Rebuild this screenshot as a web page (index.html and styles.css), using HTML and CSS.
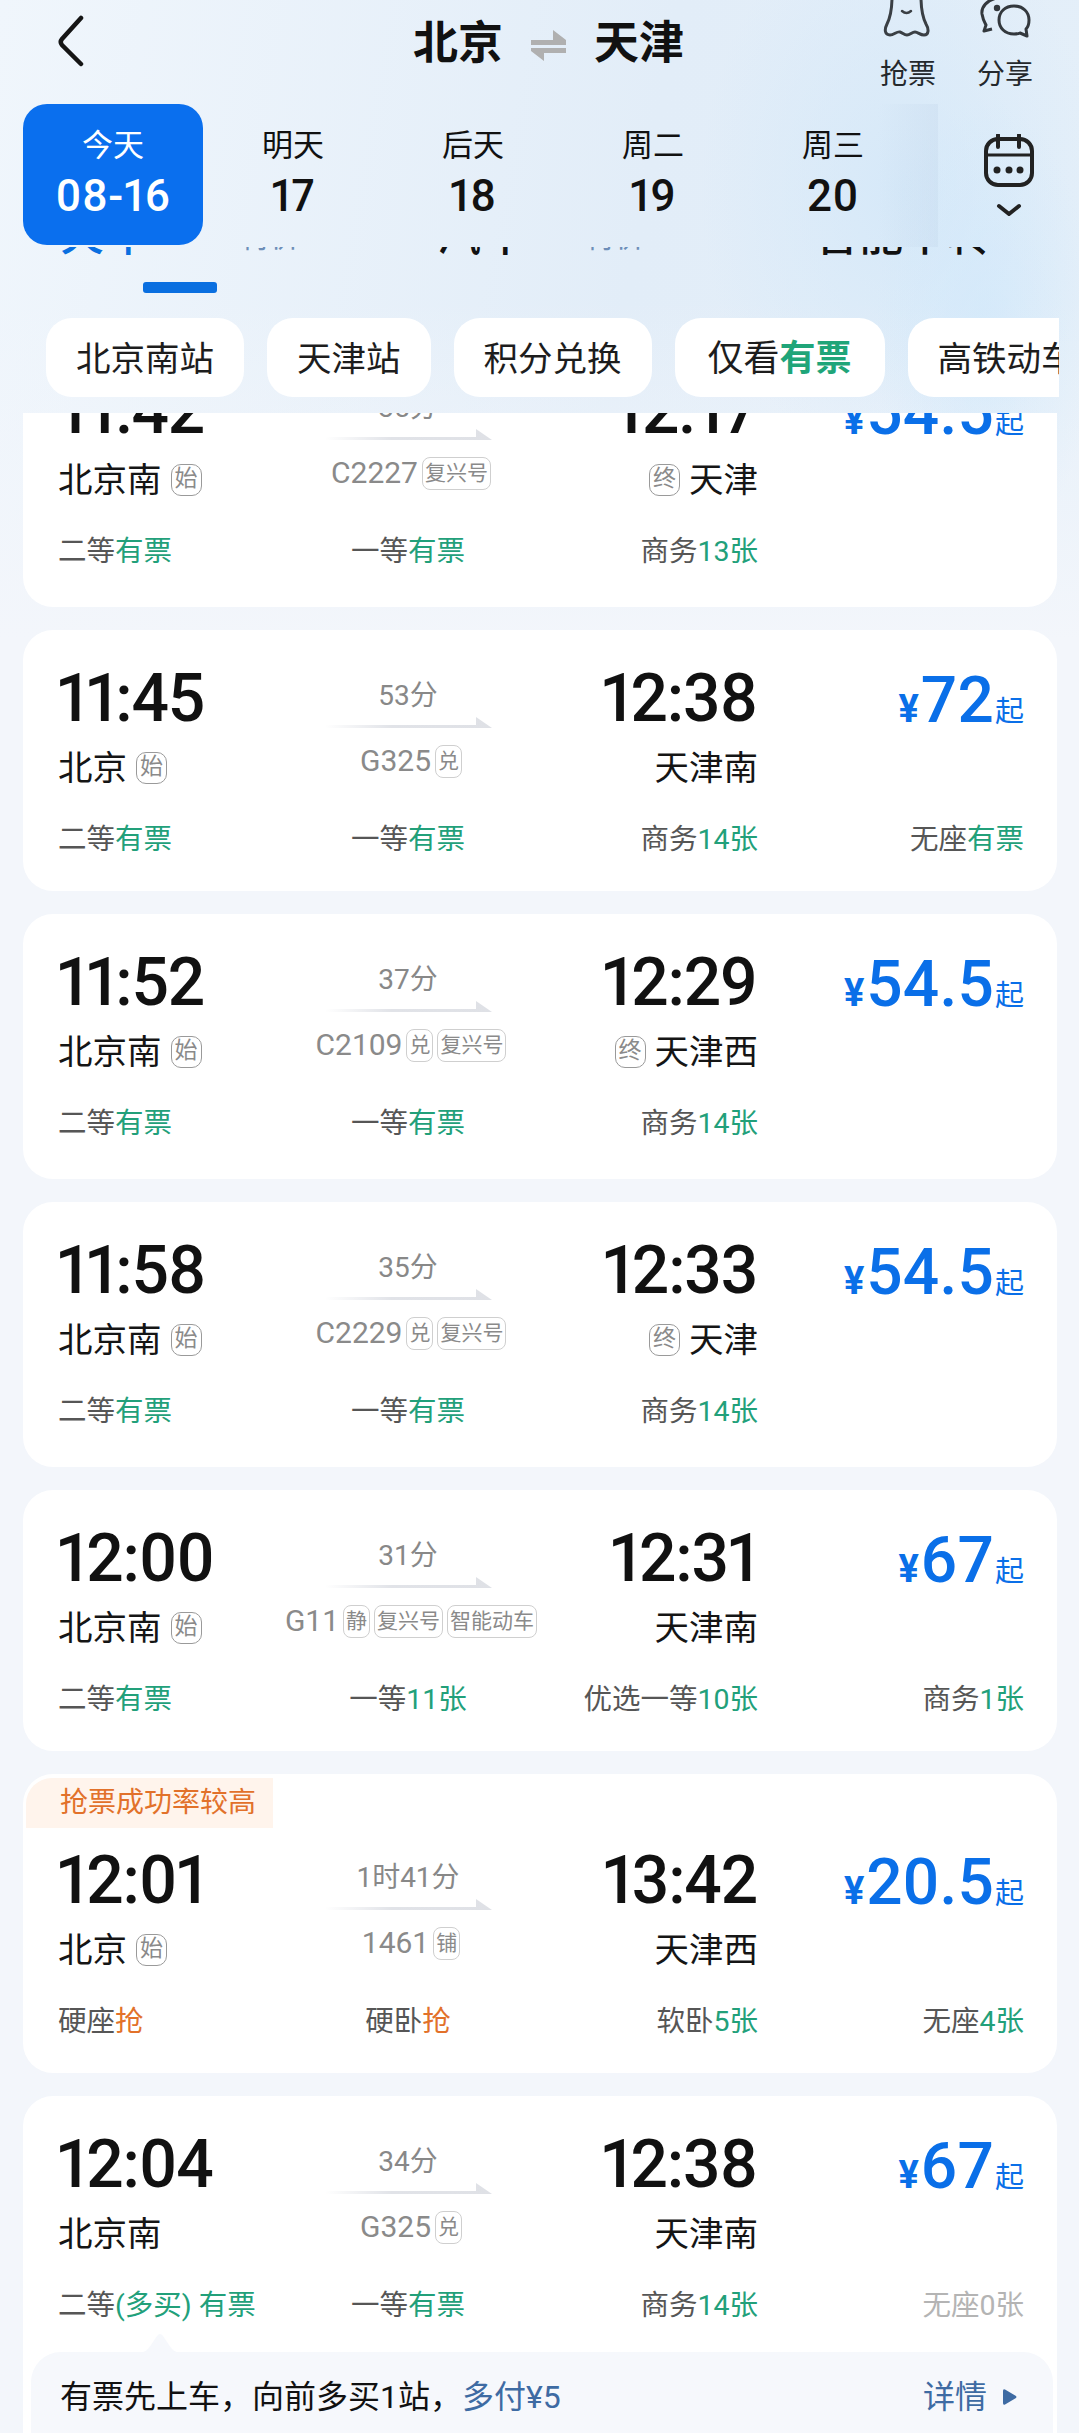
FILE: index.html
```html
<!DOCTYPE html>
<html lang="zh-CN">
<head>
<meta charset="utf-8">
<title>北京 - 天津</title>
<link rel="stylesheet" href="styles.css">
</head>
<body>
<div class="page">
  <header class="topbar">
    <svg class="back" viewBox="0 0 30 52" width="30" height="52"><path d="M26 3 L7 24 Q4.500 27 7 30 L26 49" fill="none" stroke="#151515" stroke-width="4.500" stroke-linecap="round"/></svg>
    <div class="route">
      <span>北京</span>
      <svg class="swap" viewBox="0 0 35 31" width="35" height="31"><path d="M0 10H22V0L35 10V15H0Z M0 18H35V23H13V31L0 21Z" fill="#b0b0b0"/></svg>
      <span>天津</span>
    </div>
    <div class="actions">
      <div class="action">
        <svg class="action-icon" viewBox="0 0 49 38" width="49" height="38"><path d="M8 -3C8 10 6 18 3 24C0 30 1 35 6 35C10 35 13 31 16 32C19 33 20 35 23 35C26 35 28 32 31 32C34 32 36 35 40 35C45 35 45 29 42 24C39 18 37 10 37 -3" fill="none" stroke="#3a3f44" stroke-width="3"/><path d="M18 11Q22.500 15 27 11" fill="none" stroke="#3a3f44" stroke-width="2.500" stroke-linecap="round"/></svg>
        <span>抢票</span>
      </div>
      <div class="action">
        <svg class="action-icon" viewBox="0 0 49 38" width="49" height="38"><path d="M16 -2C6 0 0 7 1 14C2 20 4 23 5 25L3 31L11 29" fill="none" stroke="#33383d" stroke-width="3" stroke-linejoin="round"/><circle cx="16" cy="8" r="3.200" fill="#33383d"/><path d="M33 6C42 6 48 12 48 20C48 24 47 27 45 29L46 36L39 33C37 34 35 34 33 34C24 34 18 28 18 20C18 12 24 6 33 6Z" fill="none" stroke="#33383d" stroke-width="3" stroke-linejoin="round"/></svg>
        <span>分享</span>
      </div>
    </div>
  </header>

  <nav class="dates">
    <div class="date date--active"><span class="date-label">今天</span><span class="date-num">08-16</span></div>
    <div class="date"><span class="date-label">明天</span><span class="date-num">17</span></div>
    <div class="date"><span class="date-label">后天</span><span class="date-num">18</span></div>
    <div class="date"><span class="date-label">周二</span><span class="date-num">19</span></div>
    <div class="date"><span class="date-label">周三</span><span class="date-num">20</span></div>
    <div class="date-fade"></div>
    <div class="calendar">
      <svg viewBox="0 0 50 54" width="50" height="54"><rect x="2" y="5" width="46" height="46" rx="12" fill="none" stroke="#222" stroke-width="4"/><path d="M2 21H48" stroke="#222" stroke-width="3"/><path d="M14 1V13M35 1V13" stroke="#222" stroke-width="4" stroke-linecap="round"/><circle cx="13" cy="36" r="3.500" fill="#222"/><circle cx="25" cy="36" r="3.500" fill="#222"/><circle cx="36" cy="36" r="3.500" fill="#222"/></svg>
      <svg class="calendar-chev" viewBox="0 0 26 14" width="26" height="14"><path d="M3 3L13 11L23 3" fill="none" stroke="#222" stroke-width="4" stroke-linecap="round" stroke-linejoin="round"/></svg>
    </div>
  </nav>

  <div class="tabs">
    <span class="tab tab--active">火车</span>
    <span class="tab-sub tab-sub--a">特价</span>
    <span class="tab tab--b">汽车</span>
    <span class="tab-sub tab-sub--b">特价</span>
    <span class="tab tab--c">智能中转</span>
  </div>
  <div class="tab-bar"></div>

  <div class="chips">
    <span class="chip">北京南站</span>
    <span class="chip">天津站</span>
    <span class="chip">积分兑换</span>
    <span class="chip chip--wide">仅看<b>有票</b></span>
    <span class="chip">高铁动车</span>
  </div>

  <main class="list">
    <div class="list-inner">

      <article class="card card--end">
        <div class="time">11:42</div>
        <div class="dur"><span>35分</span><svg class="arrow" viewBox="0 0 167 11" width="167" height="11"><polygon points="0,8 151,8 151,0 167,11 0,11" fill="url(#fade)"/></svg></div>
        <div class="time time--r">12:17</div>
        <div class="price"><i>¥</i><b>54.5</b><em>起</em></div>
        <div class="station">北京南<span class="mark">始</span></div>
        <div class="train">C2227<span class="tag">复兴号</span></div>
        <div class="station station--r"><span class="mark mark--l">终</span>天津</div>
        <div></div>
        <div class="seat">二等<span class="ok">有票</span></div>
        <div class="seat seat--c">一等<span class="ok">有票</span></div>
        <div class="seat seat--r">商务<span class="ok">13张</span></div>
        <div class="seat seat--r"></div>
      </article>

      <article class="card">
        <div class="time">11:45</div>
        <div class="dur"><span>53分</span><svg class="arrow" viewBox="0 0 167 11" width="167" height="11"><polygon points="0,8 151,8 151,0 167,11 0,11" fill="url(#fade)"/></svg></div>
        <div class="time time--r">12:38</div>
        <div class="price"><i>¥</i><b>72</b><em>起</em></div>
        <div class="station">北京<span class="mark">始</span></div>
        <div class="train">G325<span class="tag">兑</span></div>
        <div class="station station--r">天津南</div>
        <div></div>
        <div class="seat">二等<span class="ok">有票</span></div>
        <div class="seat seat--c">一等<span class="ok">有票</span></div>
        <div class="seat seat--r">商务<span class="ok">14张</span></div>
        <div class="seat seat--r">无座<span class="ok">有票</span></div>
      </article>

      <article class="card card--end">
        <div class="time">11:52</div>
        <div class="dur"><span>37分</span><svg class="arrow" viewBox="0 0 167 11" width="167" height="11"><polygon points="0,8 151,8 151,0 167,11 0,11" fill="url(#fade)"/></svg></div>
        <div class="time time--r">12:29</div>
        <div class="price"><i>¥</i><b>54.5</b><em>起</em></div>
        <div class="station">北京南<span class="mark">始</span></div>
        <div class="train">C2109<span class="tag">兑</span><span class="tag">复兴号</span></div>
        <div class="station station--r"><span class="mark mark--l">终</span>天津西</div>
        <div></div>
        <div class="seat">二等<span class="ok">有票</span></div>
        <div class="seat seat--c">一等<span class="ok">有票</span></div>
        <div class="seat seat--r">商务<span class="ok">14张</span></div>
        <div class="seat seat--r"></div>
      </article>

      <article class="card card--end">
        <div class="time">11:58</div>
        <div class="dur"><span>35分</span><svg class="arrow" viewBox="0 0 167 11" width="167" height="11"><polygon points="0,8 151,8 151,0 167,11 0,11" fill="url(#fade)"/></svg></div>
        <div class="time time--r">12:33</div>
        <div class="price"><i>¥</i><b>54.5</b><em>起</em></div>
        <div class="station">北京南<span class="mark">始</span></div>
        <div class="train">C2229<span class="tag">兑</span><span class="tag">复兴号</span></div>
        <div class="station station--r"><span class="mark mark--l">终</span>天津</div>
        <div></div>
        <div class="seat">二等<span class="ok">有票</span></div>
        <div class="seat seat--c">一等<span class="ok">有票</span></div>
        <div class="seat seat--r">商务<span class="ok">14张</span></div>
        <div class="seat seat--r"></div>
      </article>

      <article class="card">
        <div class="time">12:00</div>
        <div class="dur"><span>31分</span><svg class="arrow" viewBox="0 0 167 11" width="167" height="11"><polygon points="0,8 151,8 151,0 167,11 0,11" fill="url(#fade)"/></svg></div>
        <div class="time time--r">12:31</div>
        <div class="price"><i>¥</i><b>67</b><em>起</em></div>
        <div class="station">北京南<span class="mark">始</span></div>
        <div class="train">G11<span class="tag">静</span><span class="tag">复兴号</span><span class="tag">智能动车</span></div>
        <div class="station station--r">天津南</div>
        <div></div>
        <div class="seat">二等<span class="ok">有票</span></div>
        <div class="seat seat--c">一等<span class="ok">11张</span></div>
        <div class="seat seat--r">优选一等<span class="ok">10张</span></div>
        <div class="seat seat--r">商务<span class="ok">1张</span></div>
      </article>

      <article class="card card--flag">
        <div class="flag">抢票成功率较高</div>
        <div class="time">12:01</div>
        <div class="dur"><span>1时41分</span><svg class="arrow" viewBox="0 0 167 11" width="167" height="11"><polygon points="0,8 151,8 151,0 167,11 0,11" fill="url(#fade)"/></svg></div>
        <div class="time time--r">13:42</div>
        <div class="price"><i>¥</i><b>20.5</b><em>起</em></div>
        <div class="station">北京<span class="mark">始</span></div>
        <div class="train">1461<span class="tag">铺</span></div>
        <div class="station station--r">天津西</div>
        <div></div>
        <div class="seat">硬座<span class="grab">抢</span></div>
        <div class="seat seat--c">硬卧<span class="grab">抢</span></div>
        <div class="seat seat--r">软卧<span class="ok">5张</span></div>
        <div class="seat seat--r">无座<span class="ok">4张</span></div>
      </article>

      <article class="card card--tip">
        <div class="time">12:04</div>
        <div class="dur"><span>34分</span><svg class="arrow" viewBox="0 0 167 11" width="167" height="11"><polygon points="0,8 151,8 151,0 167,11 0,11" fill="url(#fade)"/></svg></div>
        <div class="time time--r">12:38</div>
        <div class="price"><i>¥</i><b>67</b><em>起</em></div>
        <div class="station">北京南</div>
        <div class="train">G325<span class="tag">兑</span></div>
        <div class="station station--r">天津南</div>
        <div></div>
        <div class="seat">二等<span class="ok">(多买) 有票</span></div>
        <div class="seat seat--c">一等<span class="ok">有票</span></div>
        <div class="seat seat--r">商务<span class="ok">14张</span></div>
        <div class="seat seat--r seat--none">无座0张</div>
        <div class="tip">
          <svg class="tip-pin" viewBox="0 0 60 20" width="60" height="20"><path d="M6 20C14 20 17 18 21 12L27 3Q30 -1 33 3L39 12C43 18 46 20 54 20Z" fill="#f6f8fc"/></svg>
          <span class="tip-text">有票先上车，向前多买1站，<span class="tip-pay">多付¥5</span></span>
          <span class="tip-more">详情<svg viewBox="0 0 14 18" width="14" height="18"><path d="M2 1.500L13 8Q14 9 13 10L2 16.500Q0 17.500 0 15V3Q0 0.500 2 1.500Z" fill="#3e6ba3"/></svg></span>
        </div>
      </article>

    </div>
  </main>
</div>
<svg class="defs" width="0" height="0"><defs><linearGradient id="fade"><stop offset="0" stop-color="#e1e3e8" stop-opacity="0"/><stop offset="0.4" stop-color="#e1e3e8"/><stop offset="1" stop-color="#dfe1e6"/></linearGradient></defs></svg>
</body>
</html>
```

FILE: styles.css
```css
* { box-sizing: border-box; }
html, body { margin: 0; padding: 0; }
body {
  width: 1079px;
  height: 2433px;
  overflow: hidden;
  font-family: Roboto, "Noto Sans CJK SC", sans-serif;
  color: #111;
}
.defs { position: absolute; }
.page {
  width: 1079px;
  height: 2433px;
  overflow: hidden;
  background:
    radial-gradient(ellipse 110px 230px at 985px 330px, rgba(205, 231, 251, .55), rgba(205, 231, 251, 0)),
    radial-gradient(ellipse 200px 280px at 900px 190px, rgba(205, 229, 249, .6), rgba(205, 229, 249, 0)),
    linear-gradient(to bottom, rgba(243, 246, 251, 0) 300px, #f3f6fb 640px),
    linear-gradient(100deg, #f0f6fc 0, #e2edf8 45%, #e4eff9 75%, #e8f2fb 100%);
}

/* top bar */
.topbar {
  height: 104px;
  display: flex;
  position: relative;
  align-items: flex-start;
}
.back { margin: 15px 0 0 55px; flex: none; }
.route {
  position: absolute;
  left: 413px;
  top: 11px;
  display: flex;
  align-items: center;
  font-size: 45px;
  font-weight: 700;
  line-height: 66px;
  gap: 28px;
}
.swap { margin-top: 2px; }
.actions {
  position: absolute;
  left: 880px;
  top: 0;
  display: flex;
  gap: 41px;
}
.action { display: flex; flex-direction: column; align-items: center; width: 56px; }
.action-icon { overflow: visible; display: block; }
.action span {
  font-size: 28px;
  line-height: 42px;
  margin-top: 16px;
  color: #24282c;
}

/* dates */
.dates {
  height: 143px;
  padding-left: 23px;
  display: flex;
  position: relative;
  align-items: flex-start;
}
.date {
  width: 180px;
  height: 141px;
  flex: none;
  display: flex;
  flex-direction: column;
  align-items: center;
  padding-top: 19px;
  border-radius: 24px;
}
.date--active { background: #0a6fee; color: #fff; }
.date-label { font-size: 31px; line-height: 46px; }
.date-num { font-size: 44px; font-weight: 500; line-height: 52px; letter-spacing: .5px; font-variant-numeric: proportional-nums; padding-top: 1px; }
.date-fade {
  width: 60px;
  height: 143px;
  margin-left: -45px;
  background: linear-gradient(to right, rgba(190, 210, 232, 0), rgba(190, 210, 232, .28));
}
.calendar {
  margin-left: 46px;
  margin-top: 30px;
  display: flex;
  flex-direction: column;
  align-items: center;
  gap: 15px;
}

/* tabs, cut by the date strip */
.tabs {
  height: 11px;
  overflow: hidden;
  position: relative;
}
.tab, .tab-sub { position: absolute; bottom: 0; white-space: nowrap; }
.tab { font-size: 44px; line-height: 44px; font-weight: 500; }
.tab--active { left: 60px; color: #0a6fe0; }
.tab--b { left: 437px; }
.tab--c { left: 815px; }
.tab-sub { bottom: 6px; font-size: 30px; line-height: 30px; color: #6d8eb8; }
.tab-sub--a { left: 240px; }
.tab-sub--b { left: 585px; }
.tab-bar {
  width: 74px;
  height: 11px;
  margin: 24px 0 0 143px;
  background: #0a6fe0;
  border-radius: 3px;
}

/* chips */
.chips {
  margin: 25px 20px 0 46px;
  height: 79px;
  display: flex;
  gap: 23px;
  overflow: hidden;
}
.chip {
  flex: none;
  background: #fff;
  border-radius: 26px;
  padding: 3px 30px 0;
  font-size: 34.500px;
  line-height: 76px;
  color: #1d1d1d;
  height: 79px;
}
.chip--wide { padding: 3px 33px 0; font-size: 36px; }
.chip b { color: #1fa579; font-weight: 700; }

/* list */
.list {
  margin: 16px 22px 0 23px;
  height: 2021px;
  overflow: hidden;
}
.list-inner {
  margin-top: -71px;
  display: flex;
  flex-direction: column;
  gap: 23px;
}
.card {
  position: relative;
  background: #fff;
  border-radius: 30px;
  padding: 30px 33px 0 35px;
  height: 261px;
  display: grid;
  grid-template-columns: 200px 300px 200px 266px;
  grid-template-rows: 78px 81px 42px;
  flex: none;
}
.card--end { height: 265px; }
.card--flag { height: 299px; padding-top: 68px; }
.card--tip { height: 400px; }

.time {
  font-size: 66px;
  font-weight: 500;
  line-height: 78px;
  letter-spacing: -1.200px;
  color: #111;
  white-space: nowrap;
  font-variant-numeric: proportional-nums;
  margin-left: -1px;
}
.time--r { text-align: right; margin: 0 1px 0 0; }
.dur {
  display: flex;
  flex-direction: column;
  align-items: center;
  font-size: 28px;
  line-height: 42px;
  color: #888;
  padding-top: 15px;
}
.arrow { display: block; margin-top: 0; }
.price {
  display: flex;
  justify-content: flex-end;
  align-items: baseline;
  color: #0a6fe8;
  line-height: 78px;
  padding-top: 2px;
}
.price i { font-style: normal; font-weight: 700; font-size: 38px; margin-right: 2px; }
.price b { font-size: 64px; font-weight: 500; letter-spacing: .2px; }
.price em { font-style: normal; font-size: 29px; margin-left: 1px; }

.station {
  font-size: 34.500px;
  line-height: 50px;
  color: #151515;
  display: flex;
  align-items: center;
  padding-top: 5px;
  align-self: start;
}
.station--r { justify-content: flex-end; }
.mark {
  width: 31px;
  height: 32px;
  border: 1.500px solid #9a9a9a;
  border-radius: 10px;
  font-size: 23px;
  line-height: 28px;
  text-align: center;
  color: #8a8a8a;
  margin-left: 9px;
  flex: none;
}
.mark--l { margin: 0 9px 0 0; }
.train {
  display: flex;
  align-items: center;
  justify-content: center;
  font-size: 30px;
  line-height: 36px;
  color: #8a8a8a;
  padding: 5px 0 0 6px;
  align-self: start;
  white-space: nowrap;
  gap: 2px;
}
.tag {
  border: 1.500px solid #cfcfcf;
  border-radius: 8px;
  font-size: 21px;
  line-height: 30px;
  height: 33px;
  padding: 0 2px;
  margin-left: 2px;
  color: #8a8a8a;
}
.seat {
  font-size: 28.500px;
  line-height: 42px;
  color: #565656;
  white-space: nowrap;
}
.seat--c { text-align: center; }
.seat--r { text-align: right; }
.seat--none { color: #b4b4b4; }
.ok { color: #22a07a; }
.grab { color: #e2712a; }

.flag {
  position: absolute;
  left: 3px;
  top: 4px;
  width: 247px;
  height: 50px;
  padding-left: 34px;
  background: #fff4ec;
  border-radius: 26px 0 0 0;
  color: #e2712a;
  font-size: 28px;
  line-height: 50px;
  white-space: nowrap;
}

.tip {
  position: absolute;
  left: 8px;
  right: 4px;
  top: 256px;
  height: 140px;
  background: #f6f8fc;
  border-radius: 30px;
  display: flex;
  justify-content: space-between;
  padding: 22px 36px 0 29px;
  font-size: 32px;
  line-height: 46px;
}
.tip-pin { position: absolute; left: 99px; top: -19px; }
.tip-pay { color: #3e6ba3; }
.tip-more { color: #3e6ba3; display: flex; align-items: center; gap: 16px; height: 46px; }
```
